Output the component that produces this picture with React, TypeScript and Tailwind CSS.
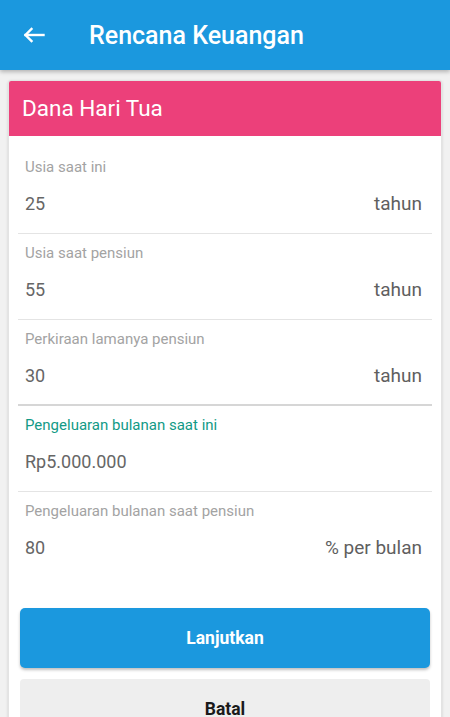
export default function App() {
  const fields = [
    { label: 'Usia saat ini', value: '25', unit: 'tahun' },
    { label: 'Usia saat pensiun', value: '55', unit: 'tahun' },
    { label: 'Perkiraan lamanya pensiun', value: '30', unit: 'tahun', thick: true },
    { label: 'Pengeluaran bulanan saat ini', value: 'Rp5.000.000', unit: '', active: true },
    { label: 'Pengeluaran bulanan saat pensiun', value: '80', unit: '% per bulan', last: true },
  ];

  return (
    <div className="w-[450px] h-[717px] overflow-hidden bg-[#f1f1f1] font-['Roboto',sans-serif]">
      {/* App bar */}
      <div className="relative z-10 h-[70px] bg-[#1b98de] flex items-center shadow-[0_2px_4px_rgba(0,0,0,0.25)]">
        <svg width="22" height="16" viewBox="0 0 22 16" className="ml-[23px]" fill="none" stroke="white" strokeWidth="2.4" strokeLinecap="square">
          <path d="M2.5 8H20.5" />
          <path d="M8.5 2L2.5 8L8.5 14" />
        </svg>
        <h1 className="ml-[44px] text-[25px] font-medium text-white leading-none">Rencana Keuangan</h1>
      </div>

      {/* Card */}
      <div className="mx-[8px] mt-[10px] bg-white rounded-t-[3px] border border-[#e3e3e3] shadow-[0_1px_3px_rgba(0,0,0,0.15)]">
        <div className="h-[55px] bg-[#ec407a] rounded-t-[2px] flex items-center pl-[13px]">
          <span className="text-[22.5px] text-white leading-none">Dana Hari Tua</span>
        </div>

        <div className="pt-[12px] px-[9px]">
          {fields.map((f) => (
            <div
              key={f.label}
              className={
                f.last
                  ? 'pt-[9px] pb-[17px]'
                  : f.thick
                  ? 'pt-[9px] pb-[16px] border-b-2 border-[#d6d6d6]'
                  : 'pt-[9px] pb-[17px] border-b border-[#e4e4e4]'
              }
            >
              <div className={`pl-[7px] text-[15px] leading-[20px] ${f.active ? 'text-[#129a86]' : 'text-[#a3a3a3]'}`}>
                {f.label}
              </div>
              <div className="mt-[15px] pl-[7px] pr-[10px] flex justify-between text-[18px] leading-[24px] text-[#666666]">
                <span>{f.value}</span>
                <span className="text-[19px] text-[#5f5f5f]">{f.unit}</span>
              </div>
            </div>
          ))}
        </div>

        <div className="px-[11px] pt-[31px] flex flex-col gap-[11px] pb-4">
          <button className="h-[60px] rounded-[5px] bg-[#1b98de] text-white text-[17.5px] font-bold shadow-[0_2px_3px_rgba(0,0,0,0.25)]">
            Lanjutkan
          </button>
          <button className="h-[60px] rounded-[4px] bg-[#eeeeee] text-[#1a1a1a] text-[17.5px] font-bold">
            Batal
          </button>
        </div>
      </div>
    </div>
  );
}
